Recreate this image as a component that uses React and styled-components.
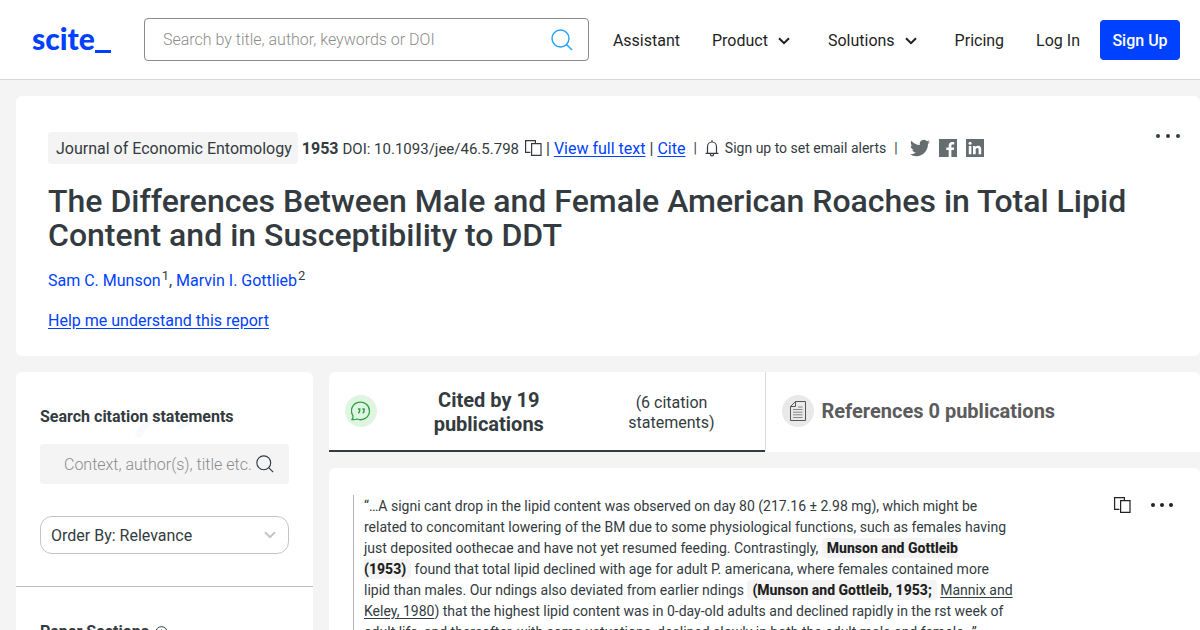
import React from 'react';
import styled, { createGlobalStyle } from 'styled-components';

const App = () => {
    return (
    <>
        <GlobalStyle/>
        <Header>
            <Logo href="#" aria-label="scite">scite<LogoBar/></Logo>
            <SearchBox>
                <SearchInput type="text" aria-label="Search papers" placeholder="Search by title, author, keywords or DOI"/>
                <SearchButton type="button" aria-label="Search"><SearchIcon size={22}/></SearchButton>
            </SearchBox>
            <Nav>
                <NavLink href="#">Assistant</NavLink>
                <NavButton type="button">Product <ChevronIcon/></NavButton>
                <NavButton type="button">Solutions <ChevronIcon/></NavButton>
                <NavLink href="#">Pricing</NavLink>
                <NavLink href="#">Log In</NavLink>
            </Nav>
            <SignUp type="button">Sign Up</SignUp>
        </Header>
        <Page>
            <Paper>
                <PaperTop>
                    <Meta>
                        <Journal>Journal of Economic Entomology</Journal>
                        <Year>1953</Year>
                        <Doi>DOI: 10.1093/jee/46.5.798</Doi>
                        <CopyDoi type="button" aria-label="Copy DOI"><CopyIcon/></CopyDoi>
                        <MetaText>|</MetaText>
                        <MetaLink href="#">View full text</MetaLink>
                        <MetaText>|</MetaText>
                        <MetaLink href="#">Cite</MetaLink>
                        <Divider>|</Divider>
                        <Alerts type="button"><BellIcon/>Sign up to set email alerts</Alerts>
                        <Divider>|</Divider>
                        <Share/>
                    </Meta>
                    <MoreButton type="button" aria-label="More actions"><DotsIcon size={26}/></MoreButton>
                </PaperTop>
                <Title>The Differences Between Male and Female American Roaches in Total Lipid Content and in Susceptibility to DDT</Title>
                <Authors>
                    <a href="#">Sam C. Munson</a><sup>1</sup>, <a href="#">Marvin I. Gottlieb</a><sup>2</sup>
                </Authors>
                <HelpLink href="#">Help me understand this report</HelpLink>
            </Paper>
            <Columns>
                <Sidebar>
                    <Filters>
                        <Swirl width="64" height="26" viewBox="0 0 64 26" aria-hidden="true">
                            <path d="M6 21q3-9 10-14M45 10q8-1 12-6"/>
                        </Swirl>
                        <FilterLabel htmlFor="context">Search citation statements</FilterLabel>
                        <ContextBox>
                            <ContextInput id="context" type="text" placeholder="Context, author(s), title etc."/>
                            <SearchIcon size={18}/>
                        </ContextBox>
                        <SelectBox>
                            <Select aria-label="Order by" defaultValue="relevance">
                                <option value="relevance">Order By: Relevance</option>
                                <option value="newest">Order By: Newest</option>
                            </Select>
                            <ChevronIcon/>
                        </SelectBox>
                    </Filters>
                    <Sections>
                        <h2>Paper Sections</h2>
                        <InfoIcon/>
                    </Sections>
                </Sidebar>
                <Main>
                    <Tabs role="tablist">
                        <Tab type="button" role="tab" aria-selected="true" $active>
                            <Badge $color="#dff5e1"><QuoteIcon/></Badge>
                            <TabTitle $active>Cited by 19 publications</TabTitle>
                            <TabNote>(6 citation statements)</TabNote>
                        </Tab>
                        <Tab type="button" role="tab" aria-selected="false">
                            <Badge $color="#e9e9e9"><DocumentIcon/></Badge>
                            <TabTitle>References 0 publications</TabTitle>
                        </Tab>
                    </Tabs>
                    <Statement>
                        <Quote>
                            “…A signi cant drop in the lipid content was observed on day 80 (217.16 ± 2.98 mg), which might be related to concomitant lowering of the BM due to some physiological functions, such as females having just deposited oothecae and have not yet resumed feeding. Contrastingly, <Cite>Munson and Gottleib<br/>(1953)</Cite> found that total lipid declined with age for adult P. americana, where females contained more<br/>lipid than males. Our ndings also deviated from earlier ndings <Cite>(Munson and Gottleib, 1953;</Cite> <a href="#">Mannix and Keley, 1980</a>) that the highest lipid content was in 0-day-old adults and declined rapidly in the rst week of adult life, and thereafter, with some uctuations, declined slowly in both the adult male and female…”
                        </Quote>
                        <Actions>
                            <IconButton type="button" aria-label="Copy statement"><CopyIcon/></IconButton>
                            <IconButton type="button" aria-label="More"><DotsIcon size={24}/></IconButton>
                        </Actions>
                    </Statement>
                </Main>
            </Columns>
        </Page>
    </>
    );
}

const SearchIcon = ({size}) => (
    <svg width={size} height={size} viewBox="0 0 22 22" fill="none" stroke="currentColor" strokeWidth="1.4">
        <circle cx="9.5" cy="9.5" r="8.5"/>
        <path d="M15.5 15.5 21 21"/>
    </svg>
);

const ChevronIcon = () => (
    <svg width="12" height="8" viewBox="0 0 12 8" fill="none" stroke="currentColor" strokeWidth="2">
        <path d="M1 1.2 6 6.2 11 1.2"/>
    </svg>
);

const CopyIcon = () => (
    <svg width="17" height="16" viewBox="0 0 17 16" fill="none" stroke="currentColor" strokeWidth="1.2">
        <path d="M5.4 12.4H.6V.6h9.8V3"/>
        <path d="M6.6 3.6h9.4v11.8H6.6z"/>
    </svg>
);

const BellIcon = () => (
    <svg width="14" height="17" viewBox="0 0 14 17" fill="none" stroke="currentColor" strokeWidth="1.2">
        <path d="M.6 13.4h12.8M2.5 13.2V6.8a4.5 4.8 0 0 1 9 0v6.4M7 2V.3"/>
        <path d="M5.4 14a1.6 1.9 0 0 0 3.2 0"/>
    </svg>
);

const DotsIcon = ({size}) => (
    <svg width={size} height="6" viewBox={`0 0 ${size} 6`} fill="currentColor">
        <circle cx="3" cy="3" r="2"/>
        <circle cx={size / 2} cy="3" r="2"/>
        <circle cx={size - 3} cy="3" r="2"/>
    </svg>
);

const InfoIcon = () => (
    <svg width="13" height="13" viewBox="0 0 13 13" fill="none" stroke="currentColor">
        <circle cx="6.5" cy="6.5" r="5.8"/>
        <path d="M6.5 3.4v1.2M6.5 5.8v4"/>
    </svg>
);

const QuoteIcon = () => (
    <svg width="20" height="20" viewBox="0 0 20 20" fill="none" stroke="#32a048" strokeWidth="1.3">
        <path d="M1 18.6q1.2-1.6 1-3.8A9 8.8 0 1 1 6 18Q3.6 19 1 18.6Z"/>
        <path d="M7 8h1.6v2q0 1.6-1.4 2M11.4 8H13v2q0 1.6-1.4 2" strokeWidth="1.6"/>
    </svg>
);

const DocumentIcon = () => (
    <svg width="16" height="20" viewBox="0 0 16 20" fill="none" stroke="#555">
        <path d="M5.5.5h10v19H.5v-14zM5.5.5v5h-5"/>
        <path d="M8 6h4.5M3 8.5h9.5M3 11.2h9.5M3 13.8h9.5M3 16.5h9.5" stroke="#888"/>
    </svg>
);

const Share = () => (
    <ShareLinks>
        <a href="#" aria-label="Share on Twitter">
            <svg width="20" height="20" viewBox="0 0 24 24" fill="currentColor">
                <path d="M23.95 4.57a10 10 0 0 1-2.82.77 4.96 4.96 0 0 0 2.16-2.72c-.95.55-2 .95-3.13 1.18a4.92 4.92 0 0 0-8.38 4.48C7.69 8.09 4.07 6.13 1.64 3.16a4.82 4.82 0 0 0-.67 2.48c0 1.71.87 3.21 2.19 4.1a4.9 4.9 0 0 1-2.23-.62v.06a4.92 4.92 0 0 0 3.95 4.83 5 5 0 0 1-2.21.08 4.94 4.94 0 0 0 4.6 3.42A9.87 9.87 0 0 1 0 19.54a14 14 0 0 0 7.55 2.21c9.05 0 14-7.5 14-13.99l-.02-.63a9.94 9.94 0 0 0 2.42-2.56z"/>
            </svg>
        </a>
        <a href="#" aria-label="Share on Facebook">
            <svg width="18" height="18" viewBox="0 0 18 18" fill="currentColor">
                <path d="M0 0h18v18h-5.6v-6.9h2.3l.4-2.7h-2.7V6.7c0-.8.3-1.3 1.4-1.3h1.4V3c-.3 0-1.1-.1-2.1-.1-2 0-3.4 1.2-3.4 3.5v2H7.3v2.7h2.4V18H0z"/>
            </svg>
        </a>
        <a href="#" aria-label="Share on LinkedIn">
            <svg width="18" height="18" viewBox="0 0 18 18">
                <path d="M0 0h18v18H0z" fill="currentColor"/>
                <path d="M2.8 7h2.6v8.2H2.8zM7 7h2.5v1.2c.4-.7 1.2-1.4 2.6-1.4 2.6 0 3.1 1.7 3.1 4v4.4h-2.6v-4c0-1 0-2.2-1.3-2.2s-1.6 1-1.6 2.1v4.1H7z" fill="#fff"/>
                <circle cx="4.1" cy="4.3" r="1.5" fill="#fff"/>
            </svg>
        </a>
    </ShareLinks>
);

const GlobalStyle = createGlobalStyle`
    * {
        box-sizing: border-box;
    }

    body {
        margin: 0;
        background: #f4f4f4;
        color: #333b40;
        font-family: "Roboto", "Liberation Sans", sans-serif;
        font-size: 16px;
        line-height: 24px;
    }

    button, input, select {
        font: inherit;
        color: inherit;
    }

    a {
        color: #0041ff;
    }

    svg {
        display: block;
        flex-shrink: 0;
    }
`;

const PlainButton = styled.button`
    display: flex;
    align-items: center;
    padding: 0;
    border: 0;
    background: none;
    cursor: pointer;
`;

const Header = styled.header`
    display: flex;
    align-items: center;
    height: 80px;
    padding: 0 20px 0 32px;
    background: #fff;
    border-bottom: 1px solid #d8d8d8;
`;

const Logo = styled.a`
    width: 112px;
    padding-bottom: 4px;
    color: #0041ff;
    font-family: "Lato", sans-serif;
    font-size: 30px;
    font-weight: 900;
    line-height: 32px;
    text-decoration: none;
    white-space: nowrap;
`;

const LogoBar = styled.span`
    display: inline-block;
    width: 16px;
    height: 3px;
    background: #0041ff;
    vertical-align: -3px;
`;

const SearchBox = styled.div`
    display: flex;
    align-items: center;
    flex: 1;
    height: 43px;
    padding: 0 15px 0 18px;
    border: 1px solid #8a8a8a;
    border-radius: 4px;
`;

const SearchInput = styled.input`
    flex: 1;
    min-width: 0;
    padding: 0;
    border: 0;
    outline: none;
    background: none;

    &::placeholder {
        color: #8c8c8c;
        font-weight: 300;
    }
`;

const SearchButton = styled(PlainButton)`
    color: #1fa2ff;
`;

const Nav = styled.nav`
    display: flex;
    align-items: center;
    gap: 32px;
    margin: 0 20px 0 24px;
    padding-top: 2px;
    color: #1f1f1f;
`;

const NavLink = styled.a`
    color: inherit;
    text-decoration: none;
    white-space: nowrap;
`;

const NavButton = styled(PlainButton)`
    gap: 10px;
    padding-right: 6px;
`;

const SignUp = styled(PlainButton)`
    justify-content: center;
    width: 80px;
    height: 40px;
    padding-top: 2px;
    border-radius: 4px;
    background: #0041ff;
    color: #fff;
    font-weight: 500;
`;

const Page = styled.main`
    display: flex;
    flex-direction: column;
    gap: 16px;
    padding: 16px 0 0 16px;
`;

const Paper = styled.section`
    padding: 36px 19px 23px 32px;
    border-radius: 6px;
    background: #fff;
`;

const PaperTop = styled.div`
    display: flex;
    justify-content: space-between;
    align-items: flex-start;
`;

const Meta = styled.div`
    display: flex;
    align-items: center;
    gap: 4px;
    white-space: nowrap;
`;

const Journal = styled.span`
    padding: 5px 6px 3px 8px;
    border-radius: 4px;
    background: #f4f4f4;
`;

const MetaText = styled.span`
    padding-top: 2px;
`;

const Year = styled(MetaText)`
    font-weight: 700;
`;

const Doi = styled(MetaText)`
    font-size: 15px;
`;

const CopyDoi = styled(PlainButton)`
    margin-left: 2px;
`;

const MetaLink = styled.a`
    padding-top: 2px;
    text-underline-offset: 2px;
`;

const Divider = styled.span`
    margin: 0 4px;
    font-size: 14px;
`;

const Alerts = styled(PlainButton)`
    gap: 6px;
    font-size: 14px;
`;

const ShareLinks = styled.div`
    display: flex;
    align-items: center;
    gap: 9px;
    margin-left: 4px;

    a {
        color: #666d70;
    }
`;

const MoreButton = styled(PlainButton)`
    height: 8px;
`;

const Title = styled.h1`
    margin: 20px 0 17px;
    font-size: 32px;
    font-weight: 500;
    line-height: 34px;
`;

const Authors = styled.div`
    margin-bottom: 16px;

    a {
        text-decoration: none;
    }

    sup {
        margin-left: 1px;
        font-size: 13px;
        line-height: 0;
    }
`;

const HelpLink = styled.a`
    text-underline-offset: 2px;
`;

const Columns = styled.div`
    display: grid;
    grid-template-columns: 297px 1fr;
    gap: 16px;
`;

const Sidebar = styled.aside`
    border-radius: 6px 6px 0 0;
    background: #fff;
`;

const Filters = styled.div`
    position: relative;
    isolation: isolate;
    padding: 33px 24px 32px;
    border-bottom: 1px solid #bfbfbf;
`;

const Swirl = styled.svg`
    position: absolute;
    top: 44px;
    left: 116px;
    z-index: -1;
    fill: none;
    stroke: #f8faff;
    stroke-width: 7;
`;

const FilterLabel = styled.label`
    display: block;
    font-weight: 700;
`;

const ContextBox = styled.div`
    display: flex;
    align-items: center;
    height: 40px;
    margin: 15px 0 32px;
    padding: 0 15px 0 24px;
    border-radius: 4px;
    background: #f4f4f4;
`;

const ContextInput = styled(SearchInput)`
    padding-top: 2px;
`;

const SelectBox = styled.div`
    display: flex;
    align-items: center;
    height: 38px;
    padding: 0 12px 0 10px;
    border: 1px solid #c4c4c4;
    border-radius: 12px;

    svg {
        color: #c4c4c4;
    }
`;

const Select = styled.select`
    flex: 1;
    appearance: none;
    padding: 2px 0 0;
    border: 0;
    background: none;
`;

const Sections = styled.div`
    display: flex;
    align-items: center;
    gap: 6px;
    padding: 33px 24px;

    h2 {
        margin: 0;
        font-size: 16px;
        font-weight: 700;
    }
`;

const Main = styled.div`
    display: flex;
    flex-direction: column;
    gap: 16px;
    min-width: 0;
`;

const Tabs = styled.div`
    display: grid;
    grid-template-columns: 1fr 1fr;
    min-height: 80px;
    border-radius: 6px 6px 0 0;
    background: #fff;
    overflow: hidden;
`;

const Tab = styled(PlainButton)`
    gap: 8px;
    padding: 0 16px;
    border-bottom: 2px solid ${(props) => props.$active ? '#333b40' : 'transparent'};

    & + & {
        border-left: 1px solid #dcdcdc;
    }
`;

const Badge = styled.span`
    display: flex;
    justify-content: center;
    align-items: center;
    flex-shrink: 0;
    width: 32px;
    height: 32px;
    border-radius: 50%;
    background: ${(props) => props.$color};
`;

const TabTitle = styled.span`
    flex: ${(props) => props.$active ? '1' : 'none'};
    padding: ${(props) => props.$active ? '2px 34px 0 40px' : '0'};
    color: ${(props) => props.$active ? 'inherit' : '#5c5c5c'};
    font-size: 20px;
    font-weight: 700;
`;

const TabNote = styled.span`
    width: 154px;
    padding: 4px 28px 0;
    line-height: 20px;
`;

const Statement = styled.article`
    display: flex;
    justify-content: space-between;
    align-items: flex-start;
    padding: 27px 26px 27px 24px;
    border-radius: 6px;
    background: #fff;
`;

const Quote = styled.blockquote`
    max-width: 664px;
    margin: 0;
    padding: 1px 0 0 10px;
    border-left: 1px solid #b4b4b4;
    font-size: 14px;
    line-height: 21px;

    a {
        color: inherit;
        text-underline-offset: 2px;
    }
`;

const Cite = styled.strong`
    padding: 2px 5px;
    border-radius: 4px;
    background: #f4f4f4;
    color: #1f1f1f;
    font-weight: 800;
`;

const Actions = styled.div`
    display: flex;
    align-items: center;
    gap: 19px;
    color: #222;
`;

const IconButton = styled(PlainButton)`
    height: 20px;
`;

export default App;
